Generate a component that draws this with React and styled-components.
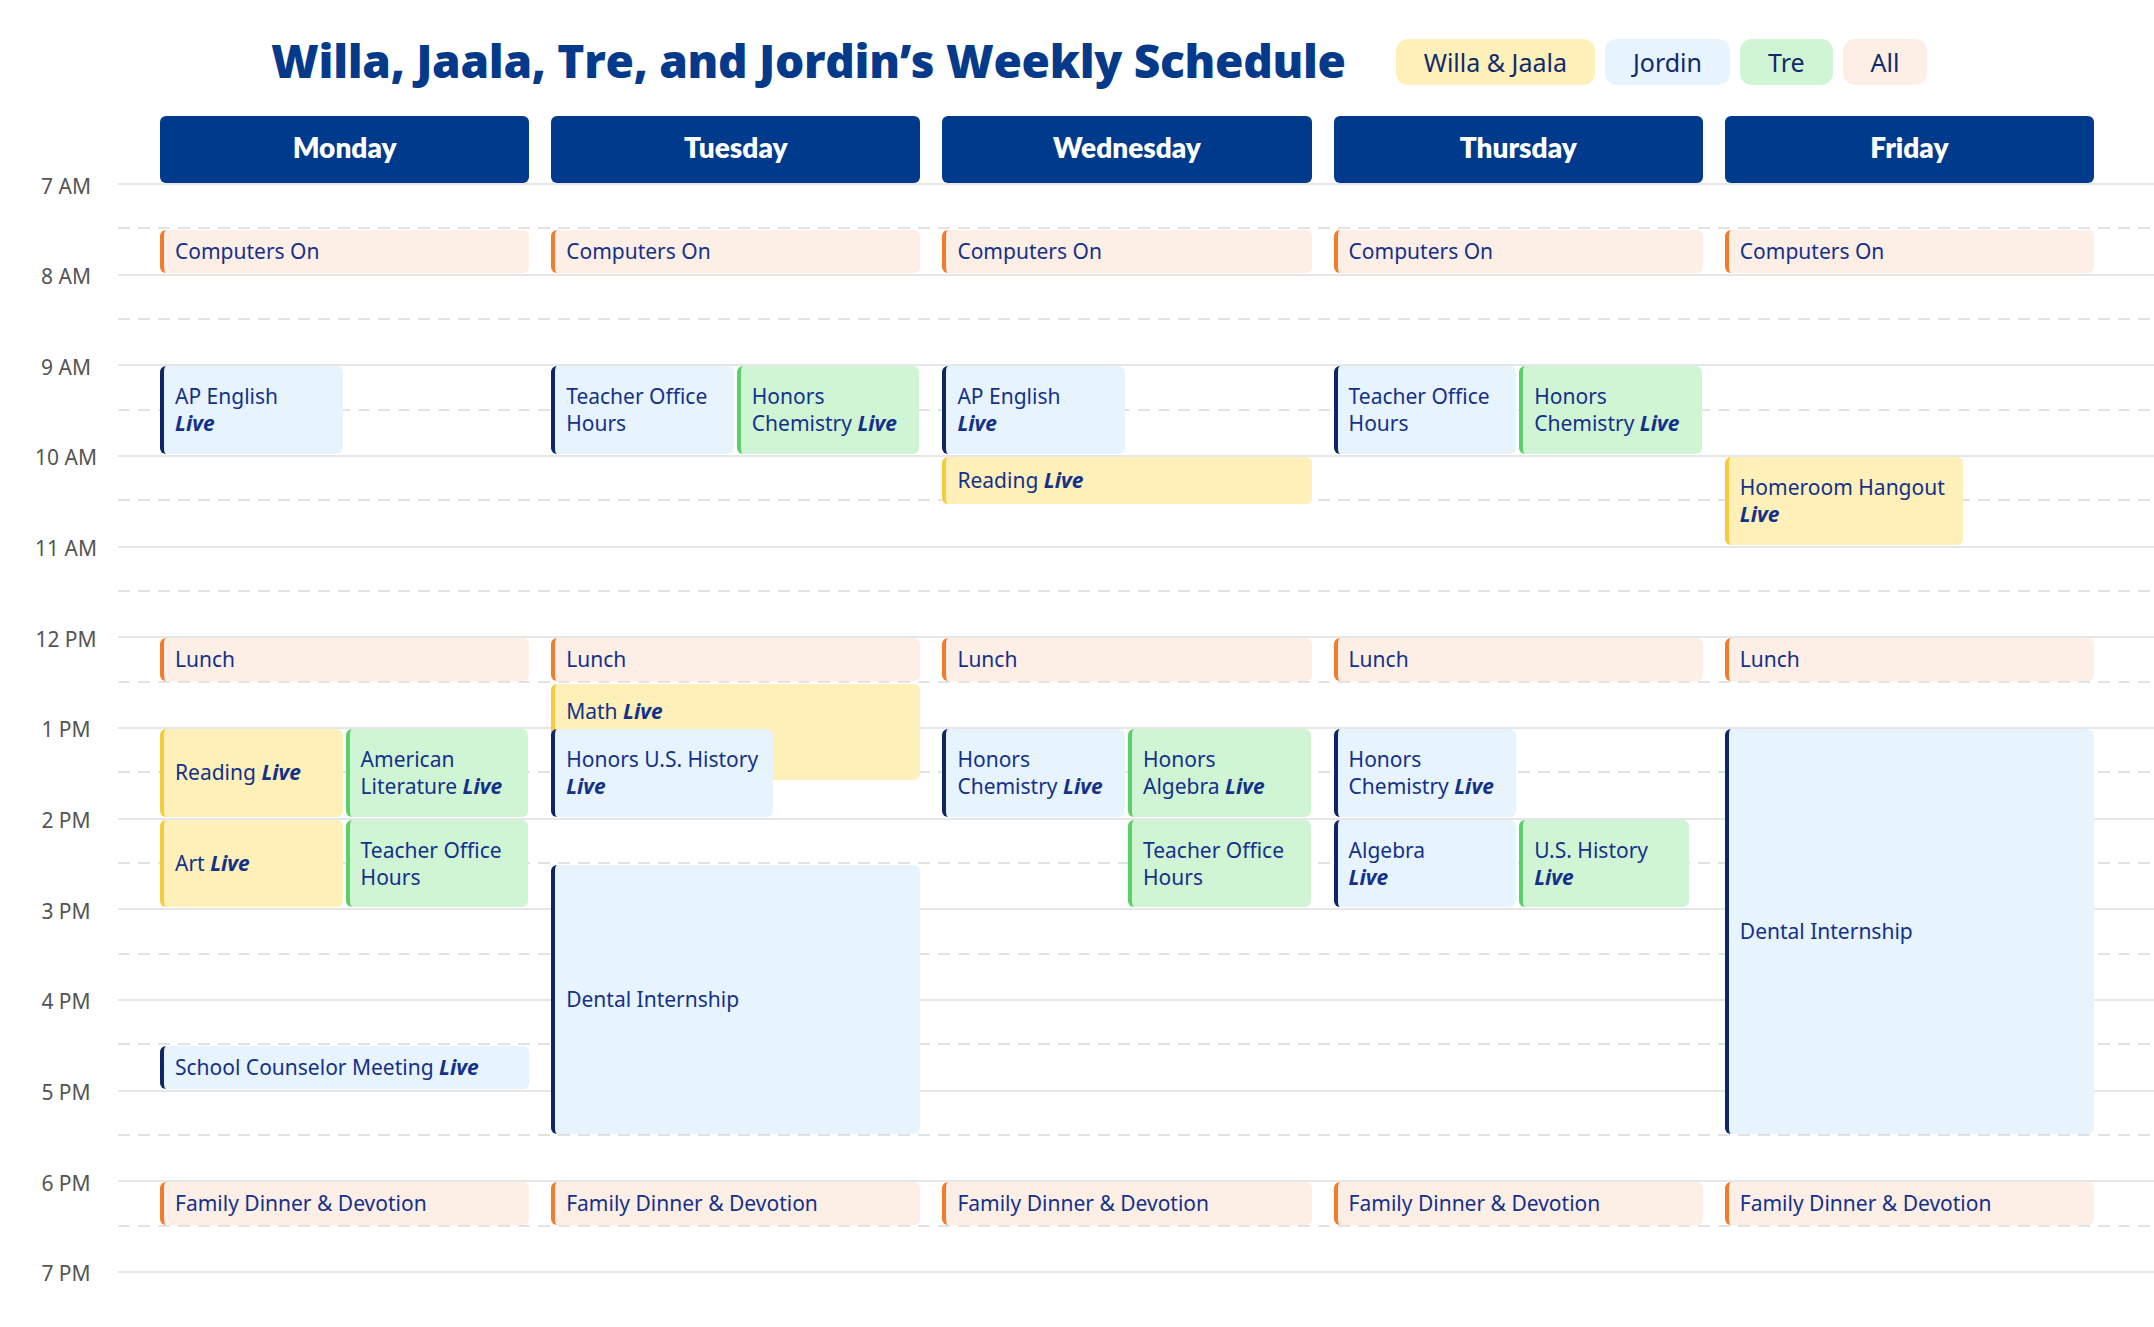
import React from 'react';
import styled, { createGlobalStyle, css } from 'styled-components';

// one hour of the timeline, in px
const HOUR = 90.67;
const FIRST_HOUR = 7;

const PEOPLE = {
    willa: { bg: '#FEF0B8', bar: '#F6CB3E', label: 'Willa & Jaala' },
    jordin: { bg: '#E7F3FD', bar: '#0B2766', label: 'Jordin' },
    tre: { bg: '#D0F5D4', bar: '#5CD068', label: 'Tre' },
    all: { bg: '#FDEEE6', bar: '#F47B2B', label: 'All' },
};

const DAYS = ['Monday', 'Tuesday', 'Wednesday', 'Thursday', 'Friday'];
const HOUR_LABELS = ['7 AM', '8 AM', '9 AM', '10 AM', '11 AM', '12 PM', '1 PM', '2 PM', '3 PM', '4 PM', '5 PM', '6 PM', '7 PM'];

const computers = { start: 7.5, end: 8, who: 'all', lines: ['Computers On'] };
const lunch = { start: 12, end: 12.5, who: 'all', lines: ['Lunch'] };
const dinner = { start: 18, end: 18.5, who: 'all', lines: ['Family Dinner & Devotion'] };

const EVENTS = [
    // Monday
    [
        computers,
        { start: 9, end: 10, who: 'jordin', lines: ['AP English', 'Live'], left: 0, width: 0.5 },
        lunch,
        { start: 13, end: 14, who: 'willa', lines: ['Reading Live'], left: 0, width: 0.5 },
        { start: 13, end: 14, who: 'tre', lines: ['American', 'Literature Live'], left: 0.5, width: 0.5 },
        { start: 14, end: 15, who: 'willa', lines: ['Art Live'], left: 0, width: 0.5 },
        { start: 14, end: 15, who: 'tre', lines: ['Teacher Office', 'Hours'], left: 0.5, width: 0.5 },
        { start: 16.5, end: 17, who: 'jordin', lines: ['School Counselor Meeting Live'] },
        dinner,
    ],
    // Tuesday
    [
        computers,
        { start: 9, end: 10, who: 'jordin', lines: ['Teacher Office', 'Hours'], left: 0, width: 0.5 },
        { start: 9, end: 10, who: 'tre', lines: ['Honors', 'Chemistry Live'], left: 0.5, width: 0.5 },
        lunch,
        { start: 12.5, end: 13.6, who: 'willa', lines: ['Math Live'], top: true },
        { start: 13, end: 14, who: 'jordin', lines: ['Honors U.S. History', 'Live'], left: 0, width: 0.607 },
        { start: 14.5, end: 17.5, who: 'jordin', lines: ['Dental Internship'] },
        dinner,
    ],
    // Wednesday
    [
        computers,
        { start: 9, end: 10, who: 'jordin', lines: ['AP English', 'Live'], left: 0, width: 0.5 },
        { start: 10, end: 10.55, who: 'willa', lines: ['Reading Live'] },
        lunch,
        { start: 13, end: 14, who: 'jordin', lines: ['Honors', 'Chemistry Live'], left: 0, width: 0.5 },
        { start: 13, end: 14, who: 'tre', lines: ['Honors', 'Algebra Live'], left: 0.5, width: 0.5 },
        { start: 14, end: 15, who: 'tre', lines: ['Teacher Office', 'Hours'], left: 0.5, width: 0.5 },
        dinner,
    ],
    // Thursday
    [
        computers,
        { start: 9, end: 10, who: 'jordin', lines: ['Teacher Office', 'Hours'], left: 0, width: 0.5 },
        { start: 9, end: 10, who: 'tre', lines: ['Honors', 'Chemistry Live'], left: 0.5, width: 0.5 },
        lunch,
        { start: 13, end: 14, who: 'jordin', lines: ['Honors', 'Chemistry Live'], left: 0, width: 0.5 },
        { start: 14, end: 15, who: 'jordin', lines: ['Algebra', 'Live'], left: 0, width: 0.5 },
        { start: 14, end: 15, who: 'tre', lines: ['U.S. History', 'Live'], left: 0.5, width: 0.466 },
        dinner,
    ],
    // Friday
    [
        computers,
        { start: 10, end: 11, who: 'willa', lines: ['Homeroom Hangout', 'Live'], left: 0, width: 0.65 },
        lunch,
        { start: 13, end: 17.5, who: 'jordin', lines: ['Dental Internship'] },
        dinner,
    ],
];

const GlobalStyle = createGlobalStyle`
  html, body {
    margin: 0;
    padding: 0;
    background: #ffffff;
  }
  body {
    font-family: 'Noto Sans', 'Open Sans', sans-serif;
  }
`;

const Page = styled.div`
  width: 2154px;
  height: 1327px;
  overflow: hidden;
  background: #fff;
`;

const TitleRow = styled.header`
  display: flex;
  align-items: center;
  gap: 50px;
  height: 46px;
  padding: 39px 0 0 271px;
  margin-bottom: 31px;
`;

const Title = styled.h1`
  margin: 0;
  padding-bottom: 5px;
  font-family: 'Open Sans', Lato, sans-serif;
  font-weight: 800;
  font-size: 46px;
  letter-spacing: -0.3px;
  color: #053a8b;
  white-space: nowrap;
`;

const Legend = styled.div`
  display: flex;
  gap: 10px;
`;

const Pill = styled.span`
  display: flex;
  align-items: center;
  height: 46px;
  padding: 0 28px;
  border-radius: 12px;
  font-size: 25px;
  color: #0f2a6b;
  background: ${p => PEOPLE[p.$who].bg};
`;

const Schedule = styled.div`
  display: grid;
  grid-template-columns: 118px 1fr;
  grid-template-rows: 67px auto;
`;

const Columns = css`
  display: grid;
  grid-template-columns: repeat(5, 1fr);
  column-gap: 22px;
  padding: 0 60px 0 42px;
`;

const DayRow = styled.div`
  ${Columns}
`;

const DayHeader = styled.div`
  display: flex;
  align-items: center;
  justify-content: center;
  padding-bottom: 6px;
  box-sizing: border-box;
  background: #003a8c;
  border-radius: 6px;
  color: #fff;
  font-family: Lato, 'Open Sans', sans-serif;
  font-weight: 800;
  font-size: 28px;
`;

const TimeAxis = styled.div`
  display: flex;
  flex-direction: column;
  margin-top: ${-HOUR / 2}px;
`;

const TimeLabel = styled.div`
  display: flex;
  align-items: center;
  justify-content: center;
  height: ${HOUR}px;
  padding: 5px 0 0 14px;
  box-sizing: border-box;
  font-size: 21px;
  color: #555;
`;

const Board = styled.div`
  position: relative;
`;

const HourRow = styled.div`
  position: relative;
  height: ${HOUR}px;
  box-sizing: border-box;
  border-top: 2px solid #e6e6e6;

  &::after {
    content: '';
    position: absolute;
    left: 0;
    right: 0;
    top: ${HOUR / 2 - 3}px;
    height: 2px;
    background: repeating-linear-gradient(90deg, #e2e2e2 0 12px, transparent 12px 20px);
  }
`;

const LastLine = styled.div`
  border-top: 2px solid #e6e6e6;
`;

const DayColumns = styled.div`
  ${Columns}
  position: absolute;
  inset: 0;
`;

const DayColumn = styled.div`
  position: relative;
`;

const Event = styled.div`
  position: absolute;
  box-sizing: border-box;
  display: flex;
  flex-direction: column;
  justify-content: ${p => (p.$top ? 'flex-start' : 'center')};
  padding: ${p => (p.$top ? '14px' : '0')} 10px 0 11px;
  background: ${p => PEOPLE[p.$who].bg};
  border-left: 4px solid ${p => PEOPLE[p.$who].bar};
  border-radius: 6px;
  font-size: 21px;
  line-height: 27px;
  color: #14318a;
  white-space: nowrap;
  overflow: hidden;
`;

const Live = styled.span`
  font-weight: 700;
  font-style: italic;
`;

const renderLine = line =>
    line.split(/(Live)/).map((part, i) => (part === 'Live' ? <Live key={i}>Live</Live> : part));

const App = () => {
    return (
        <Page>
            <GlobalStyle />
            <TitleRow>
                <Title>Willa, Jaala, Tre, and Jordin’s Weekly Schedule</Title>
                <Legend>
                    {Object.keys(PEOPLE).map(who => (
                        <Pill key={who} $who={who}>{PEOPLE[who].label}</Pill>
                    ))}
                </Legend>
            </TitleRow>
            <Schedule>
                <div />
                <DayRow>
                    {DAYS.map(day => <DayHeader key={day}>{day}</DayHeader>)}
                </DayRow>
                <TimeAxis>
                    {HOUR_LABELS.map(h => <TimeLabel key={h}>{h}</TimeLabel>)}
                </TimeAxis>
                <Board>
                    {HOUR_LABELS.slice(1).map(h => <HourRow key={h} />)}
                    <LastLine />
                    <DayColumns>
                        {EVENTS.map((events, d) => (
                            <DayColumn key={DAYS[d]}>
                                {events.map((ev, i) => (
                                    <Event
                                        key={i}
                                        $who={ev.who}
                                        $top={ev.top}
                                        style={{
                                            top: (ev.start - FIRST_HOUR) * HOUR + 2,
                                            height: (ev.end - ev.start) * HOUR - 3,
                                            left: `calc(${(ev.left || 0) * 100}% + ${ev.left ? 1 : 0}px)`,
                                            width: ev.width ? `calc(${ev.width * 100}% - 2px)` : '100%',
                                        }}
                                    >
                                        {ev.lines.map((line, j) => <div key={j}>{renderLine(line)}</div>)}
                                    </Event>
                                ))}
                            </DayColumn>
                        ))}
                    </DayColumns>
                </Board>
            </Schedule>
        </Page>
    );
};

export default App;
